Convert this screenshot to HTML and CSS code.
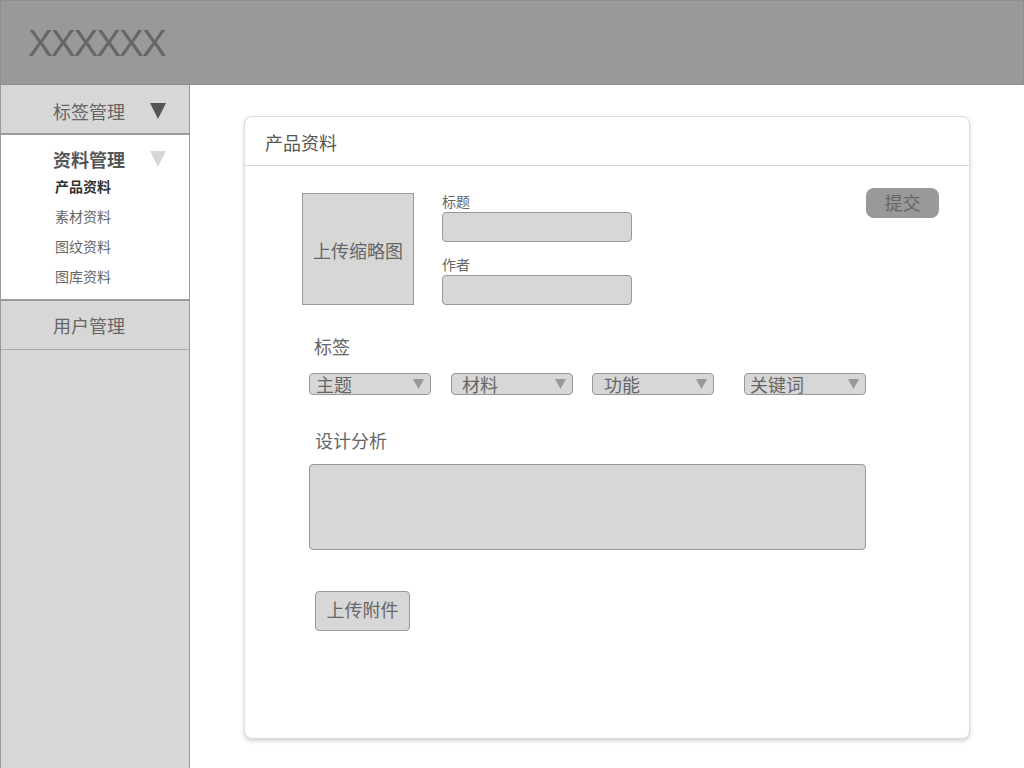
FILE: index.html
```html
<!DOCTYPE html>
<html lang="zh-CN">
<head>
<meta charset="utf-8">
<title>产品资料</title>
<link rel="stylesheet" href="styles.css">
</head>
<body>
<header class="topbar"><span class="logo">XXXXXX</span></header>
<div class="layout">
  <nav class="sidebar">
    <div class="nav-item nav-first">
      <span>标签管理</span>
      <svg class="tri" width="16" height="16" viewBox="0 0 16 16"><polygon points="0,0 16,0 8,16" fill="#555"/></svg>
    </div>
    <div class="nav-group">
      <div class="nav-group-title">
        <span>资料管理</span>
        <svg class="tri" width="16" height="16" viewBox="0 0 16 16"><polygon points="0,0 16,0 8,16" fill="#d7d7d7"/></svg>
      </div>
      <ul class="sub-list">
        <li class="active">产品资料</li>
        <li>素材资料</li>
        <li>图纹资料</li>
        <li>图库资料</li>
      </ul>
    </div>
    <div class="nav-item nav-last"><span>用户管理</span></div>
  </nav>
  <main class="main">
    <section class="card">
      <div class="card-head">产品资料</div>
      <div class="card-body">
        <div class="top-row">
          <div class="thumb">上传缩略图</div>
          <div class="fields">
            <label class="field-label">标题</label>
            <div class="input"></div>
            <label class="field-label second">作者</label>
            <div class="input"></div>
          </div>
          <button class="submit">提交</button>
        </div>
        <div class="section tags">
          <div class="section-label">标签</div>
          <div class="select-row">
            <div class="select s1"><span>主题</span><svg width="11" height="10" viewBox="0 0 11 10"><polygon points="0,0 11,0 5.5,10" fill="#999"/></svg></div>
            <div class="select s2"><span>材料</span><svg width="11" height="10" viewBox="0 0 11 10"><polygon points="0,0 11,0 5.5,10" fill="#999"/></svg></div>
            <div class="select s3"><span>功能</span><svg width="11" height="10" viewBox="0 0 11 10"><polygon points="0,0 11,0 5.5,10" fill="#999"/></svg></div>
            <div class="select s4"><span>关键词</span><svg width="11" height="10" viewBox="0 0 11 10"><polygon points="0,0 11,0 5.5,10" fill="#999"/></svg></div>
          </div>
          <div class="section-label analysis-label">设计分析</div>
          <div class="textarea"></div>
          <button class="upload">上传附件</button>
        </div>
      </div>
    </section>
  </main>
</div>
</body>
</html>
```
FILE: styles.css
```css
* { box-sizing: border-box; }
html, body { margin: 0; padding: 0; }
body {
  width: 1024px;
  height: 768px;
  overflow: hidden;
  background: #fff;
  font-family: "Noto Sans CJK SC", "Liberation Sans", sans-serif;
  color: #666;
}
.topbar {
  height: 85px;
  background: #999;
  border: 1px solid #8e8e8e;
  display: flex;
  align-items: center;
  padding-left: 27px;
  padding-top: 2px;
}
.logo {
  font-family: "Liberation Sans", Arial, sans-serif;
  font-size: 37px;
  letter-spacing: -1.9px;
  color: #666;
  line-height: 1;
}
.layout {
  display: flex;
  height: 683px;
}
.sidebar {
  width: 190px;
  height: 100%;
  background: #d7d7d7;
  border-left: 1px solid #999;
  border-right: 1px solid #999;
  flex: none;
}
.nav-item {
  display: flex;
  align-items: center;
  height: 50px;
  padding-left: 52px;
  padding-right: 23px;
  font-size: 18px;
  color: #666;
  border-bottom: 2px solid #999;
}
.nav-item .tri, .nav-group-title .tri { margin-left: auto; }
.nav-first { height: 50px; padding-top: 3px; }
.nav-last { height: 49px; border-bottom: 1px solid #aaa; }
.nav-group {
  background: #fff;
  border-bottom: 2px solid #999;
  padding: 12px 23px 7px 52px;
  height: 166px;
}
.nav-group-title {
  display: flex;
  align-items: center;
  height: 24px;
  font-size: 18px;
  font-weight: bold;
  color: #555;
}
.sub-list {
  list-style: none;
  margin: 0;
  padding: 0 0 0 2px;
}
.sub-list li {
  height: 30px;
  line-height: 30px;
  font-size: 14px;
  color: #666;
}
.sub-list li.active { color: #333; font-weight: bold; }
.main {
  flex: 1;
  padding: 31px 0 0 54px;
}
.card {
  width: 726px;
  height: 623px;
  border: 1px solid #dcdcdc;
  border-radius: 8px;
  box-shadow: 0 2px 4px rgba(0,0,0,0.18);
  background: #fff;
}
.card-head {
  height: 49px;
  border-bottom: 1px solid #d4d4d4;
  padding-left: 20px;
  font-size: 18px;
  color: #555;
  display: flex;
  align-items: center;
  padding-top: 2px;
}
.card-body {
  padding: 27px 0 0 57px;
}
.top-row {
  display: flex;
  align-items: flex-start;
}
.thumb {
  width: 112px;
  height: 112px;
  background: #d7d7d7;
  border: 1px solid #999;
  display: flex;
  align-items: center;
  justify-content: center;
  font-size: 18px;
  color: #666;
  padding-top: 2px;
}
.fields {
  margin-left: 28px;
  width: 190px;
}
.field-label {
  display: block;
  height: 19px;
  line-height: 17px;
  font-size: 14px;
  color: #666;
}
.field-label.second { margin-top: 14px; }
.input {
  height: 30px;
  background: #d7d7d7;
  border: 1px solid #999;
  border-radius: 4px;
}
.submit {
  margin-left: auto;
  margin-right: 30px;
  margin-top: -5px;
  width: 73px;
  height: 30px;
  background: #999;
  border: none;
  border-radius: 8px;
  font-family: inherit;
  font-size: 18px;
  color: #666;
  padding: 0 0 3px 0;
  line-height: 24px;
}
.section { margin-left: 7px; }
.section-label {
  margin-top: 30px;
  padding-left: 5px;
  height: 24px;
  line-height: 22px;
  font-size: 18px;
  color: #666;
}
.select-row {
  display: flex;
  margin-top: 14px;
}
.select {
  width: 122px;
  height: 22px;
  background: #d7d7d7;
  border: 1px solid #999;
  border-radius: 4px;
  display: flex;
  align-items: center;
  padding: 0 6px 1px 6px;
  font-size: 18px;
  line-height: 20px;
  color: #666;
}
.select svg { margin-left: auto; margin-top: 1px; }
.select.s2 { margin-left: 20px; padding-left: 10px; }
.select.s3 { margin-left: 19px; padding-left: 11px; }
.select.s4 { margin-left: 30px; padding-left: 5px; }
.analysis-label { margin-top: 34px; padding-left: 6px; }
.textarea {
  margin-top: 11px;
  width: 557px;
  height: 86px;
  background: #d7d7d7;
  border: 1px solid #999;
  border-radius: 4px;
}
.upload {
  display: block;
  margin-top: 41px;
  margin-left: 6px;
  width: 95px;
  height: 40px;
  background: #d7d7d7;
  border: 1px solid #999;
  border-radius: 4px;
  font-family: inherit;
  font-size: 18px;
  color: #666;
  padding: 0 0 4px 0;
}
```
